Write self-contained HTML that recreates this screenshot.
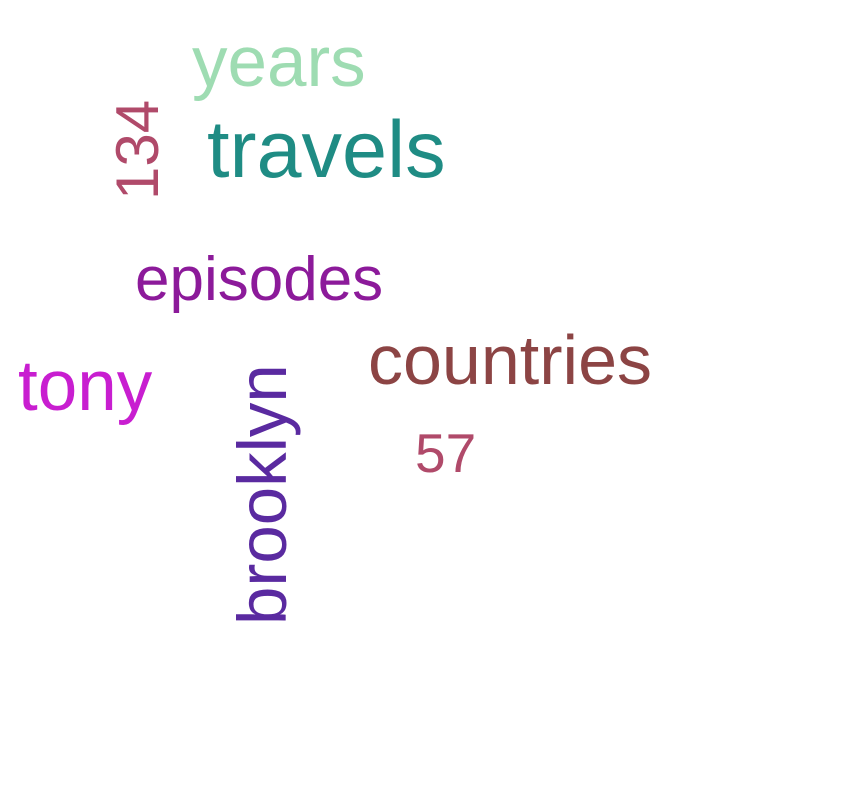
<!DOCTYPE html>
<html><head><meta charset="utf-8"><style>
html,body{margin:0;padding:0;background:#fff;width:863px;height:800px;overflow:hidden;position:relative}
.w{position:absolute;font-family:"Liberation Sans",sans-serif;line-height:1;white-space:nowrap;margin:0}
.r{transform-origin:0 0;transform:rotate(-90deg)}
</style></head><body>
<div class="w" style="left:192px;top:27px;font-size:71px;color:#9edcb2">years</div>
<div class="w r" style="left:108px;top:200px;font-size:60px;color:#b04a6a">134</div>
<div class="w" style="left:207px;top:110px;font-size:81px;color:#1f8c84">travels</div>
<div class="w" style="left:135px;top:249px;font-size:62px;color:#8c1a9a">episodes</div>
<div class="w" style="left:18px;top:351px;font-size:71px;color:#c81ed0">tony</div>
<div class="w" style="left:368px;top:325px;font-size:70px;color:#8c4444">countries</div>
<div class="w" style="left:415px;top:426px;font-size:55px;color:#b04a6a">57</div>
<div class="w r" style="left:228px;top:625px;font-size:69px;color:#5a2aa0">brooklyn</div>
</body></html>
